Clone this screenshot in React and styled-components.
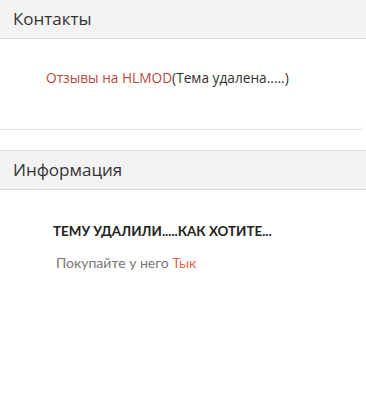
import styled, { createGlobalStyle } from 'styled-components'

const GlobalStyle = createGlobalStyle`
  html, body {
    margin: 0;
    padding: 0;
    background: #ffffff;
  }
  body {
    font-family: "Open Sans", "Noto Sans", sans-serif;
    color: #333;
  }
`

function App() {
  return (
    <Page>
      <GlobalStyle />

      <Block>
        <BlockHeader>Контакты</BlockHeader>
        <BlockBody>
          <LinkRow>
            <Link href='#'>Отзывы на HLMOD</Link>(Тема удалена.....)
          </LinkRow>
        </BlockBody>
      </Block>

      <Block $top>
        <BlockHeader>Информация</BlockHeader>
        <InfoBody>
          <InfoTitle>ТЕМУ УДАЛИЛИ.....КАК ХОТИТЕ...</InfoTitle>
          <InfoText>Покупайте у него <Link href='#' $accent>Тык</Link></InfoText>
        </InfoBody>
      </Block>
    </Page>
  )
}

const Page = styled.div`
  width: 366px;
  height: 401px;
  overflow: hidden;
  display: flex;
  flex-direction: column;
  gap: 20px;
`

const Block = styled.div`
  width: 100%;
  border-top: ${(props) => (props.$top ? '1px solid #e2e2e2' : 'none')};
`

const BlockHeader = styled.div`
  height: 39px;
  box-sizing: border-box;
  padding: 0 13px 1px;
  display: flex;
  align-items: center;
  background: #f3f3f3;
  border-bottom: 1px solid #dcdcdc;
  font-size: 17px;
  color: #333;
`

const BlockBody = styled.div`
  height: 91px;
  margin-right: 3px;
  box-sizing: border-box;
  border-bottom: 1px solid #e3e3e3;
  border-bottom-right-radius: 4px;
  padding: 29px 0 0 46px;
`

const LinkRow = styled.div`
  font-size: 13.7px;
  color: #333;
`

const Link = styled.a`
  color: ${(props) => (props.$accent ? '#e5674a' : '#b8493b')};
  text-decoration: none;
`

const InfoBody = styled.div`
  padding: 33px 0 0 53px;
  display: flex;
  flex-direction: column;
  gap: 15px;
`

const InfoTitle = styled.div`
  font-family: Lato, "Open Sans", sans-serif;
  font-weight: 700;
  font-size: 13.4px;
  color: #222;
`

const InfoText = styled.div`
  font-family: Lato, "Open Sans", sans-serif;
  font-size: 14px;
  color: #777;
  padding-left: 3px;
`

export default App
